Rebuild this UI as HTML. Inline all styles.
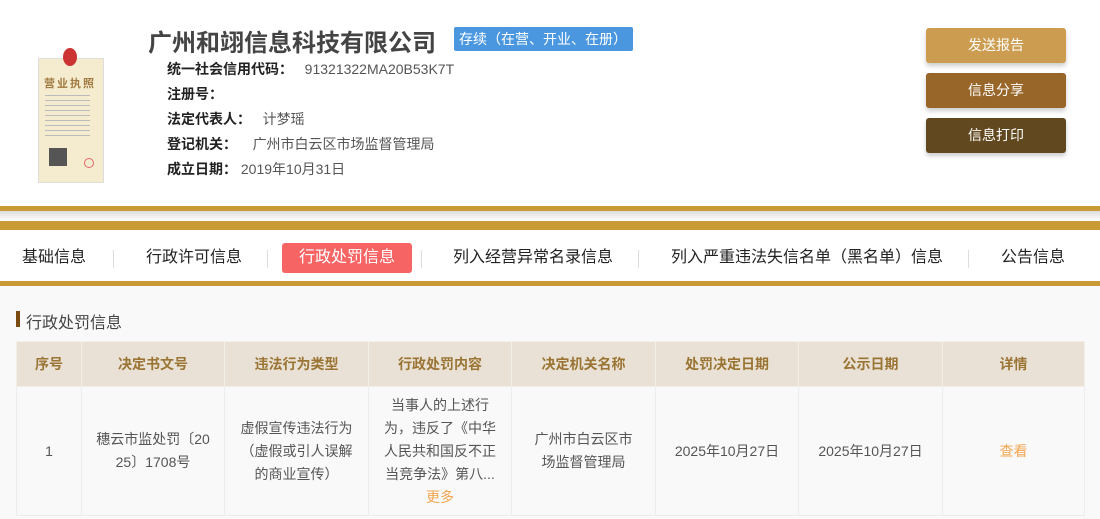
<!DOCTYPE html>
<html><head><meta charset="utf-8"><style>
*{margin:0;padding:0;box-sizing:border-box}
body{width:1100px;height:519px;overflow:hidden;background:#f9f9f9;font-family:"Liberation Sans","Noto Sans CJK SC",sans-serif;position:relative;color:#333}
.top{position:absolute;left:0;top:0;width:1100px;height:206px;background:#fff}
.abs{position:absolute}
.title{left:148px;top:23px;font-size:24px;font-weight:bold;color:#444;white-space:nowrap}
.badge{left:454px;top:27px;width:179px;height:24px;background:#4a97e0;color:#fff;font-size:14px;line-height:24px;padding-left:5px;border-radius:2px}
.info{left:167px;font-size:14px;color:#222;font-weight:bold}
.info span{font-weight:normal;color:#555}
.btn{left:926px;width:140px;height:35px;border-radius:3px;color:#fff;text-align:center;line-height:35px;font-size:14px;box-shadow:0 3px 5px rgba(0,0,0,.2)}
.gold{background:#c99a35;left:0;width:1100px}
.nav{left:0;top:230px;width:1100px;height:51px;background:#fff}
.nav div{position:absolute;top:13px;font-size:16px;color:#222;height:30px;line-height:30px}
.sep{position:absolute;top:20px;width:1px;height:18px;background:#ddd}
table{position:absolute;left:16px;top:341px;width:1069px;border-collapse:collapse;font-size:14px;table-layout:fixed}
th{background:#e9e1d5;color:#9a7433;height:45px;font-weight:bold;border:1px solid #f2efe9}
td{background:#f9f9f9;color:#555;height:129px;text-align:center;border:1px solid #ececec;line-height:23px;padding:0 10px;word-break:break-all}
</style></head><body>
<div class="top"></div>
<div class="abs" style="left:38px;top:58px;width:66px;height:125px;background:#f5ecd0;border:1px solid #ddd"></div>
<div class="abs" style="left:63px;top:48px;width:14px;height:18px;background:#c33;border-radius:50%"></div>
<div class="abs" style="left:44px;top:75px;font-size:11px;color:#a07a40;font-weight:bold;letter-spacing:2px">营业执照</div>
<div class="abs" style="left:45px;top:95px;width:45px;height:45px;background:repeating-linear-gradient(#bbb 0 1px,transparent 1px 5px)"></div>
<div class="abs" style="left:49px;top:148px;width:18px;height:18px;background:#555"></div>
<div class="abs" style="left:84px;top:158px;width:10px;height:10px;border-radius:50%;border:1px solid #d66"></div>
<div class="abs title">广州和翊信息科技有限公司</div>
<div class="abs badge">存续（在营、开业、在册）</div>
<div class="abs info" style="top:59px">统一社会信用代码：&nbsp;&nbsp;&nbsp;<span>91321322MA20B53K7T</span></div>
<div class="abs info" style="top:84px">注册号：</div>
<div class="abs info" style="top:109px">法定代表人：&nbsp;&nbsp;&nbsp;<span>计梦瑶</span></div>
<div class="abs info" style="top:134px">登记机关：&nbsp;&nbsp;&nbsp;&nbsp;<span>广州市白云区市场监督管理局</span></div>
<div class="abs info" style="top:159px">成立日期：&nbsp;<span>2019年10月31日</span></div>
<div class="abs btn" style="top:28px;background:#cc9d50">发送报告</div>
<div class="abs btn" style="top:73px;background:#986628">信息分享</div>
<div class="abs btn" style="top:118px;background:#62481e">信息打印</div>
<div class="abs gold" style="top:206px;height:5px"></div>
<div class="abs" style="left:0;top:211px;width:1100px;height:10px;background:linear-gradient(#ddd,#fff)"></div>
<div class="abs gold" style="top:221px;height:9px"></div>
<div class="abs nav">
<div style="left:22px">基础信息</div><span class="sep" style="left:113px"></span>
<div style="left:146px">行政许可信息</div><span class="sep" style="left:267px"></span>
<div style="left:282px;width:130px;background:#f76464;color:#fff;text-align:center;border-radius:3px">行政处罚信息</div><span class="sep" style="left:421px"></span>
<div style="left:453px">列入经营异常名录信息</div><span class="sep" style="left:638px"></span>
<div style="left:671px">列入严重违法失信名单（黑名单）信息</div><span class="sep" style="left:968px"></span>
<div style="left:1001px">公告信息</div>
</div>
<div class="abs gold" style="top:281px;height:5px"></div>
<div class="abs" style="left:16px;top:311px;width:4px;height:16px;background:#7a4a10"></div>
<div class="abs" style="left:26px;top:309px;font-size:16px;color:#444">行政处罚信息</div>
<table>
<tr><th style="width:65px">序号</th><th style="width:143px">决定书文号</th><th style="width:144px">违法行为类型</th><th style="width:143px">行政处罚内容</th><th style="width:144px">决定机关名称</th><th style="width:143px">处罚决定日期</th><th style="width:144px">公示日期</th><th>详情</th></tr>
<tr><td>1</td><td style="padding:0 13px">穗云市监处罚〔2025〕1708号</td><td>虚假宣传违法行为（虚假或引人误解的商业宣传）</td><td style="padding:0 12px">当事人的上述行为，违反了《中华人民共和国反不正当竞争法》第八...<br><span style="color:#f4a550">更多</span></td><td style="padding:0 20px">广州市白云区市场监督管理局</td><td>2025年10月27日</td><td>2025年10月27日</td><td style="color:#f4a550">查看</td></tr>
</table>
</body></html>
